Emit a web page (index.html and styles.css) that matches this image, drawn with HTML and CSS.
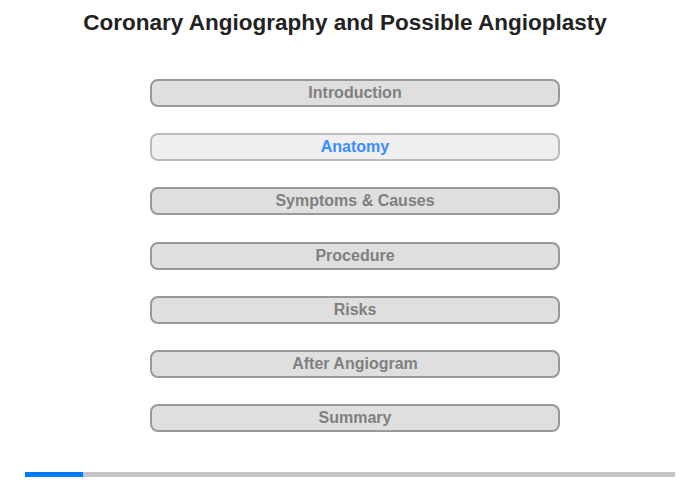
FILE: index.html
```html
<!DOCTYPE html>
<html>
<head>
    <meta charset="utf-8">
    <title>Coronary Angiography and Possible Angioplasty</title>
    <link rel="stylesheet" href="styles.css">
</head>
<body>
    <div class="page">
        <h1>Coronary Angiography and Possible Angioplasty</h1>
        <div class="menu">
            <button class="menu-btn">Introduction</button>
            <button class="menu-btn active">Anatomy</button>
            <button class="menu-btn">Symptoms &amp; Causes</button>
            <button class="menu-btn">Procedure</button>
            <button class="menu-btn">Risks</button>
            <button class="menu-btn">After Angiogram</button>
            <button class="menu-btn">Summary</button>
        </div>
        <div class="progress">
            <div class="progress-fill" style="width: 58px"></div>
        </div>
    </div>
</body>
</html>
```

FILE: styles.css
```css
body {
    margin: 0;
    padding: 0;
    font-family: "Liberation Sans", Arial, sans-serif;
    background: #fff;
}

.page {
    width: 700px;
    height: 480px;
    position: relative;
}

h1 {
    margin: 0;
    padding: 10px 10px 0 0;
    text-align: center;
    font-size: 22.5px;
    line-height: 26px;
    color: #222;
}

.menu {
    display: flex;
    flex-direction: column;
    gap: 26.2px;
    width: 410px;
    margin: 43px 0 0 150px;
}

.menu-btn {
    height: 28px;
    padding: 0;
    border: 2px solid #999;
    border-radius: 8px;
    background: #dfdfdf;
    color: #7f7f7f;
    font-family: inherit;
    font-weight: bold;
    font-size: 16px;
    cursor: pointer;
}

.menu-btn.active {
    background: #efefef;
    border-color: #bbb;
    color: #3a8cff;
}

.progress {
    position: absolute;
    left: 25px;
    right: 25px;
    top: 472px;
    height: 5px;
    background: #c6c6c6;
}

.progress-fill {
    height: 100%;
    background: #007bff;
}
```
